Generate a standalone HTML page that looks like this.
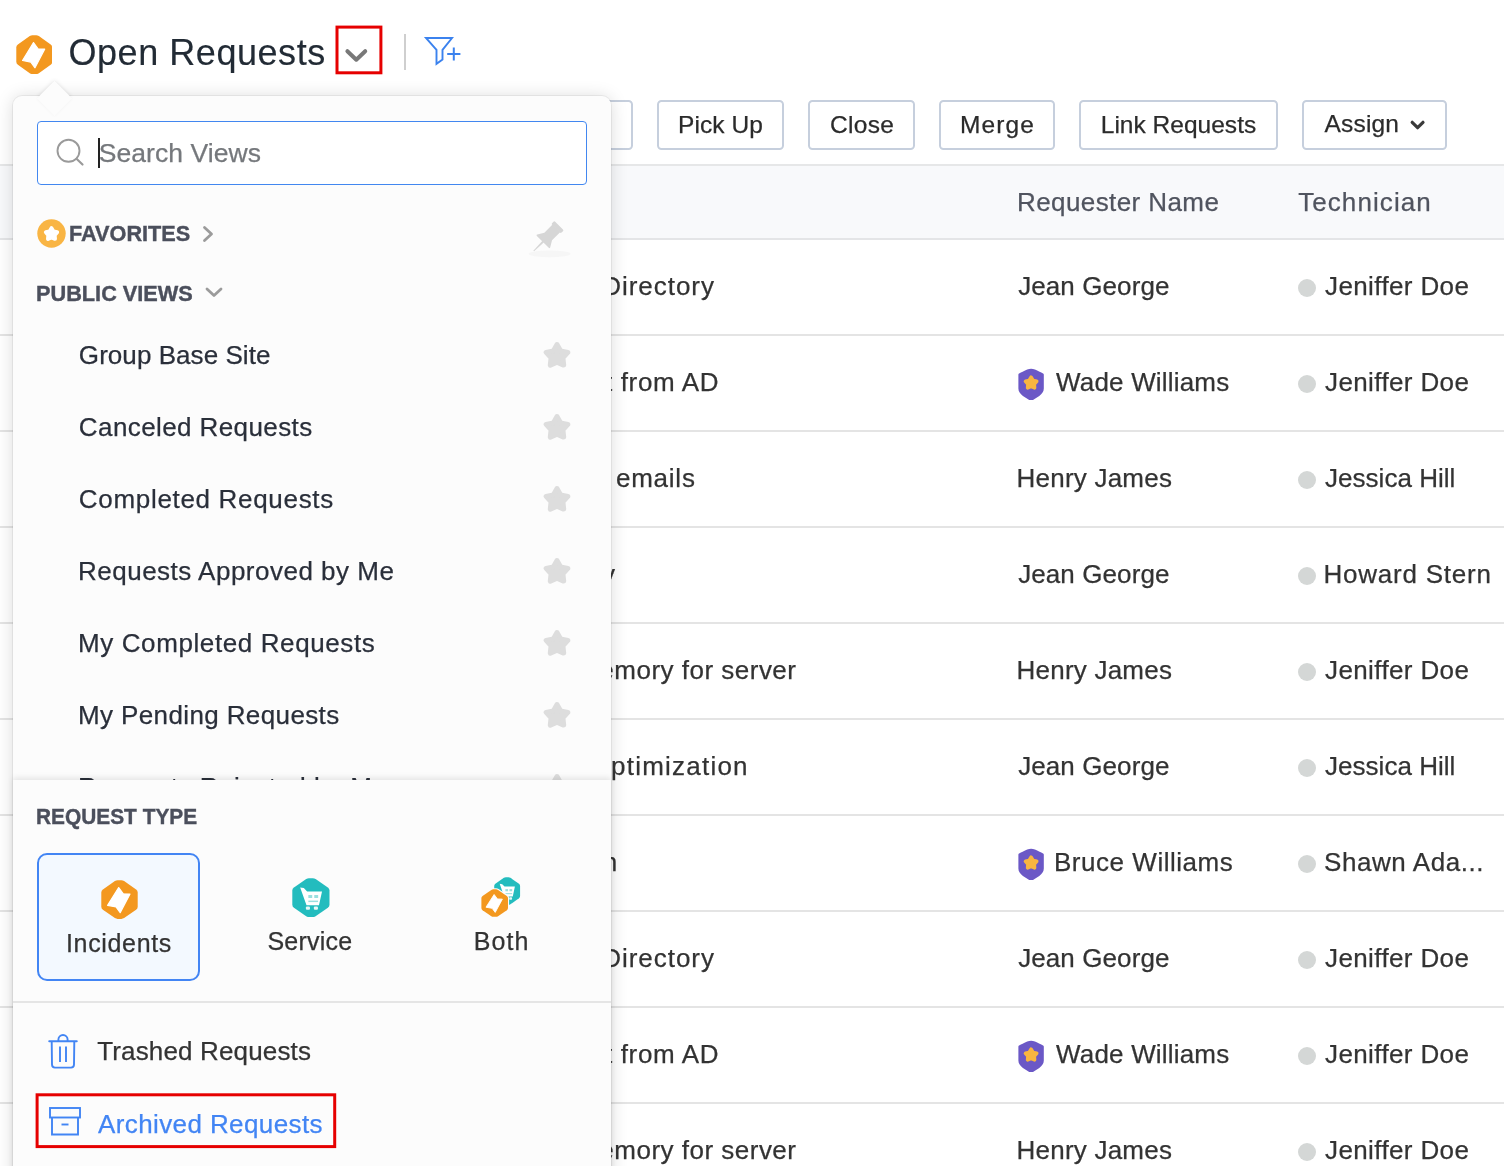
<!DOCTYPE html>
<html lang="en">
<head>
<meta charset="utf-8">
<title>Open Requests</title>
<style>
*{box-sizing:border-box}
html,body{margin:0;padding:0}
html{overflow:hidden;background:#fff}
body{width:1504px;height:1166px;overflow:hidden;background:#fff;font-family:"Liberation Sans",Arial,Helvetica,sans-serif;position:relative}
.t{position:absolute;white-space:nowrap;display:block}
#page{will-change:transform;position:absolute;left:0;top:0;width:1504px;height:1166px;overflow:hidden}
.abs{position:absolute}
#thead{position:absolute;left:0;top:164px;width:1504px;height:76px;background:#f8f9fb;border-top:2px solid #e6e7e8;border-bottom:2px solid #e4e5e7}
.rline{position:absolute;left:0;width:1504px;height:2px;background:#e4e4e4}
.dot{position:absolute;left:1298px;width:18px;height:18px;border-radius:50%;background:#d4d7d6}
.shield{position:absolute;left:1017.9px;width:26.6px;height:32.4px}
.btn{position:absolute;top:100px;height:50px;border:2px solid #c6cfdd;border-radius:4.5px;background:#fff}
#pop{position:absolute;left:12.6px;top:96px;width:598.8px;height:1100px;background:#fcfcfc;border-radius:9px;box-shadow:0 1px 17px rgba(0,0,0,.15),0 0 0 1px rgba(0,0,0,.055)}
#arrow{position:absolute;left:42.3px;top:85.7px;width:25px;height:25px;background:#fcfcfc;transform:rotate(45deg);box-shadow:0 0 5px rgba(0,0,0,.12)}
#arrow2{position:absolute;left:42.3px;top:85.7px;width:25px;height:25px;background:#fcfcfc;transform:rotate(45deg);box-shadow:0 0 3px rgba(0,0,0,.045)}
#arrowcover{display:none}
#popin{will-change:transform;position:absolute;left:0;top:0;width:1504px;height:1166px;overflow:hidden}
#list{position:absolute;left:13px;top:97px;width:598px;height:683px;overflow:hidden}
#search{position:absolute;left:37px;top:121px;width:550px;height:64px;border:1.5px solid #4287f0;border-radius:4px;background:#fff}
#caret{position:absolute;left:98px;top:138px;width:2px;height:30px;background:#222}
.star{position:absolute;left:543px;width:28px;height:28px}
#panel{position:absolute;left:12.6px;top:780px;width:598.8px;height:400px;background:#fcfcfc;box-shadow:0 -2px 6px rgba(0,0,0,.10)}
#incbox{position:absolute;left:37px;top:853px;width:163px;height:128px;border:2px solid #4285f4;border-radius:10px;background:#f3f9ff}
#pdiv{position:absolute;left:13px;top:1001px;width:598px;height:2px;background:#e5e5e5}
.red{position:absolute;border:3px solid #e60000}
</style>
</head>
<body>
<div id="page">
 <div id="thead"></div>
 <!-- header -->
 <svg class="abs" style="left:15.7px;top:34.6px;width:36.6px;height:39.4px" viewBox="0 0 37 39.400" preserveAspectRatio="none"><g><path d="M13.900 1.100Q15.200.300 16.600.300H20.400Q21.800.300 23.100 1.100L35.100 9.600Q36.700 10.800 36.700 12.600V26.800Q36.700 28.600 35.100 29.800L23.100 38.300Q21.800 39.100 20.400 39.100H16.600Q15.200 39.100 13.900 38.300L1.900 29.800Q.300 28.600.300 26.800V12.600Q.300 10.800 1.900 9.600Z" fill="#f3981f"/><path d="M17.700 7.600L22.300 13.900 29 14.100 19.200 32.800 15 27.100 6.600 25.500Z" fill="#fff" stroke="#fff" stroke-width="1.200" stroke-linejoin="round"/></g></svg>
 <svg class="abs" style="left:330px;top:20px;width:60px;height:60px" viewBox="330 20 60 60"><rect x="337" y="27.100" width="43.900" height="45.700" fill="none" stroke="#e60000" stroke-width="3"/></svg>
 <svg class="abs" style="left:343px;top:46px;width:27px;height:19px" viewBox="0 0 27 19"><path d="M4.400 5.200L13.300 13.700 22.200 5.200" fill="none" stroke="#787878" stroke-width="4" stroke-linecap="round" stroke-linejoin="round"/></svg>
 <div class="abs" style="left:404px;top:34px;width:2px;height:36px;background:#cfcfcf"></div>
 <svg class="abs" style="left:423px;top:35px;width:40px;height:32px" viewBox="0 0 40 32"><path d="M3 3h26L19.500 14.800V24.500L13.500 28.800V14.800z" fill="none" stroke="#3b82ee" stroke-width="1.900" stroke-linejoin="miter"/><path d="M24.200 19h13.200M30.800 12.400v13.200" stroke="#3b82ee" stroke-width="2" fill="none"/></svg>
 <!-- toolbar buttons -->
 <div class="btn" style="left:560px;width:73px"></div>
 <div class="btn" style="left:657px;width:127px"></div>
 <div class="btn" style="left:808px;width:107px"></div>
 <div class="btn" style="left:939px;width:116px"></div>
 <div class="btn" style="left:1079px;width:199px"></div>
 <div class="btn" style="left:1302px;width:145px"></div>
 <svg class="abs" style="left:1408px;top:118px;width:20px;height:15px" viewBox="0 0 20 15"><path d="M4.200 4.300L9.600 9.700 15 4.300" fill="none" stroke="#3a3a3a" stroke-width="3.200" stroke-linecap="round" stroke-linejoin="round"/></svg>
<div class="rline" style="top:334px"></div>
<div class="dot" style="top:279px"></div>
<div class="rline" style="top:430px"></div>
<div class="dot" style="top:375px"></div>
<svg class="shield" style="top:367.6px" viewBox="0 0 27 33" preserveAspectRatio="none"><g><path d="M13.3 0.700c2.400 0 5.200 1.300 8.600 3 2.600 1.200 4.300 1.600 4.300 2.800v14.500c0 3.200-1.800 5.400-4.600 7.400l-6 3.900c-1.500.9-3.100.9-4.600 0l-6-3.900C2.200 26.400.400 24.200.400 21V6.500c0-1.200 1.700-1.600 4.300-2.800 3.400-1.700 6.200-3 8.600-3z" fill="#6b58c6"/><path d="M13.30 9.40 L15.30 12.65 L19.01 13.55 L16.53 16.45 L16.83 20.25 L13.30 18.80 L9.77 20.25 L10.07 16.45 L7.59 13.55 L11.30 12.65Z" fill="#f9b540" stroke="#f9b540" stroke-width="3.600" stroke-linejoin="round"/></g></svg>
<div class="rline" style="top:526px"></div>
<div class="dot" style="top:471px"></div>
<div class="rline" style="top:622px"></div>
<div class="dot" style="top:567px"></div>
<div class="rline" style="top:718px"></div>
<div class="dot" style="top:663px"></div>
<div class="rline" style="top:814px"></div>
<div class="dot" style="top:759px"></div>
<div class="rline" style="top:910px"></div>
<div class="dot" style="top:855px"></div>
<svg class="shield" style="top:847.6px" viewBox="0 0 27 33" preserveAspectRatio="none"><g><path d="M13.3 0.700c2.400 0 5.200 1.300 8.600 3 2.600 1.200 4.300 1.600 4.300 2.800v14.500c0 3.200-1.800 5.400-4.600 7.400l-6 3.900c-1.500.9-3.100.9-4.600 0l-6-3.900C2.200 26.400.400 24.200.400 21V6.500c0-1.200 1.700-1.600 4.300-2.800 3.400-1.700 6.200-3 8.600-3z" fill="#6b58c6"/><path d="M13.30 9.40 L15.30 12.65 L19.01 13.55 L16.53 16.45 L16.83 20.25 L13.30 18.80 L9.77 20.25 L10.07 16.45 L7.59 13.55 L11.30 12.65Z" fill="#f9b540" stroke="#f9b540" stroke-width="3.600" stroke-linejoin="round"/></g></svg>
<div class="rline" style="top:1006px"></div>
<div class="dot" style="top:951px"></div>
<div class="rline" style="top:1102px"></div>
<div class="dot" style="top:1047px"></div>
<svg class="shield" style="top:1039.6px" viewBox="0 0 27 33" preserveAspectRatio="none"><g><path d="M13.3 0.700c2.400 0 5.200 1.300 8.600 3 2.600 1.200 4.300 1.600 4.300 2.800v14.500c0 3.200-1.800 5.400-4.600 7.400l-6 3.900c-1.500.9-3.100.9-4.600 0l-6-3.900C2.200 26.400.400 24.200.400 21V6.500c0-1.200 1.700-1.600 4.300-2.800 3.400-1.700 6.200-3 8.600-3z" fill="#6b58c6"/><path d="M13.30 9.40 L15.30 12.65 L19.01 13.55 L16.53 16.45 L16.83 20.25 L13.30 18.80 L9.77 20.25 L10.07 16.45 L7.59 13.55 L11.30 12.65Z" fill="#f9b540" stroke="#f9b540" stroke-width="3.600" stroke-linejoin="round"/></g></svg>
<div class="rline" style="top:1198px"></div>
<div class="dot" style="top:1143px"></div>
<span class="t" style="top:31px;font-size:36px;line-height:43px;color:#222b35;letter-spacing:0.543px;left:68.51px;-webkit-text-stroke:0.15px #222b35;">Open Requests</span>
<span class="t" style="top:110px;font-size:24.5px;line-height:29px;color:#2b2b2b;letter-spacing:0.068px;left:678.00px;-webkit-text-stroke:0.25px #2b2b2b;">Pick Up</span>
<span class="t" style="top:110px;font-size:24.5px;line-height:29px;color:#2b2b2b;letter-spacing:0.328px;left:830.00px;-webkit-text-stroke:0.25px #2b2b2b;">Close</span>
<span class="t" style="top:110px;font-size:24.5px;line-height:29px;color:#2b2b2b;letter-spacing:1.108px;left:960.00px;-webkit-text-stroke:0.25px #2b2b2b;">Merge</span>
<span class="t" style="top:110px;font-size:24.5px;line-height:29px;color:#2b2b2b;letter-spacing:0.018px;left:1100.74px;-webkit-text-stroke:0.25px #2b2b2b;">Link Requests</span>
<span class="t" style="top:109px;font-size:24.5px;line-height:29px;color:#2b2b2b;letter-spacing:0.183px;left:1324.54px;-webkit-text-stroke:0.25px #2b2b2b;">Assign</span>
<span class="t" style="top:187px;font-size:26px;line-height:31px;color:#50545f;letter-spacing:0.411px;left:1017.00px;-webkit-text-stroke:0.25px #50545f;">Requester Name</span>
<span class="t" style="top:187px;font-size:26px;line-height:31px;color:#50545f;letter-spacing:1.082px;left:1298.16px;-webkit-text-stroke:0.25px #50545f;">Technician</span>
<span class="t" style="top:271px;font-size:26px;line-height:31px;color:#333;letter-spacing:0.960px;right:789.08px;-webkit-text-stroke:0.25px #333;">Unable to connect to Active Directory</span>
<span class="t" style="top:271px;font-size:26px;line-height:31px;color:#333;letter-spacing:0.088px;left:1018.20px;-webkit-text-stroke:0.25px #333;">Jean George</span>
<span class="t" style="top:271px;font-size:26px;line-height:31px;color:#333;letter-spacing:0.372px;left:1325.08px;-webkit-text-stroke:0.25px #333;">Jeniffer Doe</span>
<span class="t" style="top:367px;font-size:26px;line-height:31px;color:#333;letter-spacing:0.644px;right:784.83px;-webkit-text-stroke:0.25px #333;">Remove my account from AD</span>
<span class="t" style="top:367px;font-size:26px;line-height:31px;color:#333;letter-spacing:0.190px;left:1056.00px;-webkit-text-stroke:0.25px #333;">Wade Williams</span>
<span class="t" style="top:367px;font-size:26px;line-height:31px;color:#333;letter-spacing:0.372px;left:1325.08px;-webkit-text-stroke:0.25px #333;">Jeniffer Doe</span>
<span class="t" style="top:463px;font-size:26px;line-height:31px;color:#333;letter-spacing:0.764px;right:808.33px;-webkit-text-stroke:0.25px #333;">Unable to fetch emails</span>
<span class="t" style="top:463px;font-size:26px;line-height:31px;color:#333;letter-spacing:0.216px;left:1016.59px;-webkit-text-stroke:0.25px #333;">Henry James</span>
<span class="t" style="top:463px;font-size:26px;line-height:31px;color:#333;letter-spacing:0.018px;left:1325.08px;-webkit-text-stroke:0.25px #333;">Jessica Hill</span>
<span class="t" style="top:559px;font-size:26px;line-height:31px;color:#333;letter-spacing:0.600px;right:888.40px;-webkit-text-stroke:0.25px #333;">Printer is not working properly</span>
<span class="t" style="top:559px;font-size:26px;line-height:31px;color:#333;letter-spacing:0.088px;left:1018.20px;-webkit-text-stroke:0.25px #333;">Jean George</span>
<span class="t" style="top:559px;font-size:26px;line-height:31px;color:#333;letter-spacing:0.773px;left:1323.47px;-webkit-text-stroke:0.25px #333;">Howard Stern</span>
<span class="t" style="top:655px;font-size:26px;line-height:31px;color:#333;letter-spacing:0.491px;right:707.52px;-webkit-text-stroke:0.25px #333;">Need more memory for server</span>
<span class="t" style="top:655px;font-size:26px;line-height:31px;color:#333;letter-spacing:0.216px;left:1016.59px;-webkit-text-stroke:0.25px #333;">Henry James</span>
<span class="t" style="top:655px;font-size:26px;line-height:31px;color:#333;letter-spacing:0.372px;left:1325.08px;-webkit-text-stroke:0.25px #333;">Jeniffer Doe</span>
<span class="t" style="top:751px;font-size:26px;line-height:31px;color:#333;letter-spacing:1.220px;right:755.26px;-webkit-text-stroke:0.25px #333;">Database performance optimization</span>
<span class="t" style="top:751px;font-size:26px;line-height:31px;color:#333;letter-spacing:0.088px;left:1018.20px;-webkit-text-stroke:0.25px #333;">Jean George</span>
<span class="t" style="top:751px;font-size:26px;line-height:31px;color:#333;letter-spacing:0.018px;left:1325.08px;-webkit-text-stroke:0.25px #333;">Jessica Hill</span>
<span class="t" style="top:847px;font-size:26px;line-height:31px;color:#333;letter-spacing:0.600px;right:886.27px;-webkit-text-stroke:0.25px #333;">Request for new software installation</span>
<span class="t" style="top:847px;font-size:26px;line-height:31px;color:#333;letter-spacing:0.528px;left:1054.00px;-webkit-text-stroke:0.25px #333;">Bruce Williams</span>
<span class="t" style="top:847px;font-size:26px;line-height:31px;color:#333;letter-spacing:0.577px;left:1323.97px;-webkit-text-stroke:0.25px #333;">Shawn Ada...</span>
<span class="t" style="top:943px;font-size:26px;line-height:31px;color:#333;letter-spacing:0.960px;right:789.08px;-webkit-text-stroke:0.25px #333;">Unable to connect to Active Directory</span>
<span class="t" style="top:943px;font-size:26px;line-height:31px;color:#333;letter-spacing:0.088px;left:1018.20px;-webkit-text-stroke:0.25px #333;">Jean George</span>
<span class="t" style="top:943px;font-size:26px;line-height:31px;color:#333;letter-spacing:0.372px;left:1325.08px;-webkit-text-stroke:0.25px #333;">Jeniffer Doe</span>
<span class="t" style="top:1039px;font-size:26px;line-height:31px;color:#333;letter-spacing:0.644px;right:784.83px;-webkit-text-stroke:0.25px #333;">Remove my account from AD</span>
<span class="t" style="top:1039px;font-size:26px;line-height:31px;color:#333;letter-spacing:0.190px;left:1056.00px;-webkit-text-stroke:0.25px #333;">Wade Williams</span>
<span class="t" style="top:1039px;font-size:26px;line-height:31px;color:#333;letter-spacing:0.372px;left:1325.08px;-webkit-text-stroke:0.25px #333;">Jeniffer Doe</span>
<span class="t" style="top:1135px;font-size:26px;line-height:31px;color:#333;letter-spacing:0.491px;right:707.52px;-webkit-text-stroke:0.25px #333;">Need more memory for server</span>
<span class="t" style="top:1135px;font-size:26px;line-height:31px;color:#333;letter-spacing:0.216px;left:1016.59px;-webkit-text-stroke:0.25px #333;">Henry James</span>
<span class="t" style="top:1135px;font-size:26px;line-height:31px;color:#333;letter-spacing:0.372px;left:1325.08px;-webkit-text-stroke:0.25px #333;">Jeniffer Doe</span>
</div>
<div id="arrow"></div>
<div id="pop"></div>
<div id="arrow2"></div>
<div id="arrowcover"></div>
<div id="popin">
 <div id="search"></div>
 <svg class="abs" style="left:55px;top:137px;width:30px;height:30px" viewBox="0 0 30 30"><circle cx="13.500" cy="13.800" r="11" fill="none" stroke="#9a9a9a" stroke-width="1.900"/><path d="M21.500 21.800l6 5.700" stroke="#9a9a9a" stroke-width="2.200" stroke-linecap="round"/></svg>
 <div id="caret"></div>
 <!-- favorites icon -->
 <svg class="abs" style="left:37px;top:219px;width:29px;height:29px" viewBox="0 0 29 29"><circle cx="14.500" cy="14.500" r="14.200" fill="#f9b544"/><path d="M14.50 9.20 L16.44 12.43 L20.11 13.28 L17.64 16.12 L17.97 19.87 L14.50 18.40 L11.03 19.87 L11.36 16.12 L8.89 13.28 L12.56 12.43Z" fill="#fff" stroke="#fff" stroke-width="4" stroke-linejoin="round"/></svg>
 <svg class="abs" style="left:200px;top:224px;width:16px;height:20px" viewBox="0 0 16 20"><path d="M4.500 3.500L11.500 10 4.500 16.500" fill="none" stroke="#9b9b9b" stroke-width="2.800" stroke-linecap="round" stroke-linejoin="round"/></svg>
 <svg class="abs" style="left:203px;top:284px;width:22px;height:16px" viewBox="0 0 22 16"><path d="M4 5l7 6.500L18 5" fill="none" stroke="#9b9b9b" stroke-width="2.800" stroke-linecap="round" stroke-linejoin="round"/></svg>
 <!-- pin -->
 <svg class="abs" style="left:522px;top:212px;width:56px;height:52px" viewBox="522 212 56 52"><ellipse cx="549.600" cy="253.800" rx="21" ry="3.400" fill="#f6f6f6"/><g transform="translate(558.800 225.900) rotate(45)" fill="#d6d6d6"><rect x="-6.700" y="-.400" width="13.400" height="4.400" rx="1.200"/><path d="M-5.400 3.500h10.800v11.500l3.800 6.400q.600 1.200-.800 1.200h-16.800q-1.400 0-.800-1.200l3.800-6.400z"/><path d="M-1.100 22h2.200l-.6 13.500h-1z"/></g></svg>
 <div id="list">
  <div style="position:absolute;left:-13px;top:-97px;width:1504px;height:1166px">
<svg class="star" style="top:341px" viewBox="0 0 28 28"><g><path d="M14.00 3.50 L17.64 9.88 L24.84 11.38 L19.90 16.82 L20.70 24.12 L14.00 21.10 L7.30 24.12 L8.10 16.82 L3.16 11.38 L10.36 9.88Z" fill="#dddddd" stroke="#dddddd" stroke-width="5" stroke-linejoin="round"/></g></svg>
<svg class="star" style="top:413px" viewBox="0 0 28 28"><g><path d="M14.00 3.50 L17.64 9.88 L24.84 11.38 L19.90 16.82 L20.70 24.12 L14.00 21.10 L7.30 24.12 L8.10 16.82 L3.16 11.38 L10.36 9.88Z" fill="#dddddd" stroke="#dddddd" stroke-width="5" stroke-linejoin="round"/></g></svg>
<svg class="star" style="top:485px" viewBox="0 0 28 28"><g><path d="M14.00 3.50 L17.64 9.88 L24.84 11.38 L19.90 16.82 L20.70 24.12 L14.00 21.10 L7.30 24.12 L8.10 16.82 L3.16 11.38 L10.36 9.88Z" fill="#dddddd" stroke="#dddddd" stroke-width="5" stroke-linejoin="round"/></g></svg>
<svg class="star" style="top:557px" viewBox="0 0 28 28"><g><path d="M14.00 3.50 L17.64 9.88 L24.84 11.38 L19.90 16.82 L20.70 24.12 L14.00 21.10 L7.30 24.12 L8.10 16.82 L3.16 11.38 L10.36 9.88Z" fill="#dddddd" stroke="#dddddd" stroke-width="5" stroke-linejoin="round"/></g></svg>
<svg class="star" style="top:629px" viewBox="0 0 28 28"><g><path d="M14.00 3.50 L17.64 9.88 L24.84 11.38 L19.90 16.82 L20.70 24.12 L14.00 21.10 L7.30 24.12 L8.10 16.82 L3.16 11.38 L10.36 9.88Z" fill="#dddddd" stroke="#dddddd" stroke-width="5" stroke-linejoin="round"/></g></svg>
<svg class="star" style="top:701px" viewBox="0 0 28 28"><g><path d="M14.00 3.50 L17.64 9.88 L24.84 11.38 L19.90 16.82 L20.70 24.12 L14.00 21.10 L7.30 24.12 L8.10 16.82 L3.16 11.38 L10.36 9.88Z" fill="#dddddd" stroke="#dddddd" stroke-width="5" stroke-linejoin="round"/></g></svg>
<svg class="star" style="top:773px" viewBox="0 0 28 28"><g><path d="M14.00 3.50 L17.64 9.88 L24.84 11.38 L19.90 16.82 L20.70 24.12 L14.00 21.10 L7.30 24.12 L8.10 16.82 L3.16 11.38 L10.36 9.88Z" fill="#dddddd" stroke="#dddddd" stroke-width="5" stroke-linejoin="round"/></g></svg>
  </div>
 </div>
<span class="t" style="top:137px;font-size:26.5px;line-height:32px;color:#75787c;letter-spacing:0.065px;left:98.71px;-webkit-text-stroke:0.25px #75787c;">Search Views</span>
<span class="t" style="top:220px;font-size:22.5px;line-height:27px;color:#4b4f5c;font-weight:700;left:68.77px;transform:scaleX(0.9637);transform-origin:0 0;-webkit-text-stroke:0.4px #4b4f5c;">FAVORITES</span>
<span class="t" style="top:280px;font-size:22.5px;line-height:27px;color:#4b4f5c;font-weight:700;left:36.16px;transform:scaleX(0.9649);transform-origin:0 0;-webkit-text-stroke:0.4px #4b4f5c;">PUBLIC VIEWS</span>
<span class="t" style="top:340px;font-size:26px;line-height:31px;color:#2a2f3a;letter-spacing:0.057px;left:78.86px;-webkit-text-stroke:0.25px #2a2f3a;">Group Base Site</span>
<span class="t" style="top:412px;font-size:26px;line-height:31px;color:#2a2f3a;letter-spacing:0.404px;left:78.85px;-webkit-text-stroke:0.25px #2a2f3a;">Canceled Requests</span>
<span class="t" style="top:484px;font-size:26px;line-height:31px;color:#2a2f3a;letter-spacing:0.681px;left:78.85px;-webkit-text-stroke:0.25px #2a2f3a;">Completed Requests</span>
<span class="t" style="top:556px;font-size:26px;line-height:31px;color:#2a2f3a;letter-spacing:0.495px;left:78.00px;-webkit-text-stroke:0.25px #2a2f3a;">Requests Approved by Me</span>
<span class="t" style="top:628px;font-size:26px;line-height:31px;color:#2a2f3a;letter-spacing:0.605px;left:78.00px;-webkit-text-stroke:0.25px #2a2f3a;">My Completed Requests</span>
<span class="t" style="top:700px;font-size:26px;line-height:31px;color:#2a2f3a;letter-spacing:0.381px;left:78.00px;-webkit-text-stroke:0.25px #2a2f3a;">My Pending Requests</span>
<span class="t" style="top:772px;font-size:26px;line-height:31px;color:#2a2f3a;letter-spacing:0.508px;left:78.00px;-webkit-text-stroke:0.25px #2a2f3a;">Requests Rejected by Me</span>
 <div id="panel"></div>
 <div id="incbox"></div>
 <div id="pdiv"></div>
 <svg class="abs" style="left:100.6px;top:879.8px;width:37px;height:39.2px" viewBox="0 0 37 39.400" preserveAspectRatio="none"><g><path d="M13.900 1.100Q15.200.300 16.600.300H20.400Q21.800.300 23.100 1.100L35.100 9.600Q36.700 10.800 36.700 12.600V26.800Q36.700 28.600 35.100 29.800L23.100 38.300Q21.800 39.100 20.400 39.100H16.600Q15.200 39.100 13.900 38.300L1.900 29.800Q.300 28.600.300 26.800V12.600Q.300 10.800 1.900 9.600Z" fill="#f3981f"/><path d="M17.700 7.600L22.300 13.900 29 14.100 19.200 32.800 15 27.100 6.600 25.500Z" fill="#fff" stroke="#fff" stroke-width="1.200" stroke-linejoin="round"/></g></svg>
 <svg class="abs" style="left:292.1px;top:877.6px;width:37.8px;height:39.4px" viewBox="0 0 37 39.400" preserveAspectRatio="none"><g><path d="M13.900 1.100Q15.200.300 16.600.300H20.400Q21.800.300 23.100 1.100L35.100 9.600Q36.700 10.800 36.700 12.600V26.800Q36.700 28.600 35.100 29.800L23.100 38.300Q21.800 39.100 20.400 39.100H16.600Q15.200 39.100 13.900 38.300L1.900 29.800Q.300 28.600.300 26.800V12.600Q.300 10.800 1.900 9.600Z" fill="#23bcbe"/><path d="M8 9.600l3.600.5 3.200 3.300h14.600l-3 13.800H14.200z" fill="#fff"/><rect x="16" y="17" width="3.800" height="3" fill="#9adfdf"/><rect x="21.800" y="17" width="3.800" height="3" fill="#9adfdf"/><rect x="16" y="22.600" width="9.500" height="1.500" fill="#9adfdf"/><rect x="13.600" y="28.400" width="4" height="3.400" rx="1" fill="#e8f7f7"/><rect x="21.400" y="28.400" width="4" height="3.400" rx="1" fill="#e8f7f7"/></g></svg>
 <svg class="abs" style="left:494.4px;top:876.5px;width:26.3px;height:28.1px" viewBox="0 0 37 39.400" preserveAspectRatio="none"><g><path d="M13.900 1.100Q15.200.300 16.600.300H20.400Q21.800.300 23.100 1.100L35.100 9.600Q36.700 10.800 36.700 12.600V26.800Q36.700 28.600 35.100 29.800L23.100 38.300Q21.800 39.100 20.400 39.100H16.600Q15.200 39.100 13.900 38.300L1.900 29.800Q.300 28.600.300 26.800V12.600Q.300 10.800 1.900 9.600Z" fill="#23bcbe"/><path d="M8 9.600l3.600.5 3.200 3.300h14.600l-3 13.800H14.200z" fill="#fff"/><rect x="16" y="17" width="3.800" height="3" fill="#9adfdf"/><rect x="21.800" y="17" width="3.800" height="3" fill="#9adfdf"/><rect x="16" y="22.600" width="9.500" height="1.500" fill="#9adfdf"/><rect x="13.600" y="28.400" width="4" height="3.400" rx="1" fill="#e8f7f7"/><rect x="21.400" y="28.400" width="4" height="3.400" rx="1" fill="#e8f7f7"/></g></svg>
 <svg class="abs" style="left:479.8px;top:888px;width:29.4px;height:30.2px;overflow:visible" viewBox="-1.600 -1.600 40.200 42.600" preserveAspectRatio="none"><path d="M13.900 1.100Q15.200.300 16.600.300H20.400Q21.800.300 23.100 1.100L35.100 9.600Q36.700 10.800 36.700 12.600V26.800Q36.700 28.600 35.100 29.800L23.100 38.300Q21.800 39.100 20.400 39.100H16.600Q15.200 39.100 13.900 38.300L1.900 29.800Q.300 28.600.300 26.800V12.600Q.300 10.800 1.900 9.600Z" fill="#fcfcfc" stroke="#fcfcfc" stroke-width="3"/><g><path d="M13.900 1.100Q15.200.300 16.600.300H20.400Q21.800.300 23.100 1.100L35.100 9.600Q36.700 10.800 36.700 12.600V26.800Q36.700 28.600 35.100 29.800L23.100 38.300Q21.800 39.100 20.400 39.100H16.600Q15.200 39.100 13.900 38.300L1.900 29.800Q.300 28.600.300 26.800V12.600Q.300 10.800 1.900 9.600Z" fill="#f3981f"/><path d="M17.700 7.600L22.300 13.900 29 14.100 19.200 32.800 15 27.100 6.600 25.500Z" fill="#fff" stroke="#fff" stroke-width="1.200" stroke-linejoin="round"/></g></svg>
 <!-- trash -->
 <svg class="abs" style="left:47px;top:1032px;width:32px;height:38px" viewBox="0 0 32 38"><path d="M2.200 9.300h27.600" stroke="#4285f4" stroke-width="1.900" fill="none" stroke-linecap="round"/><path d="M11.400 9V7.600a4.600 4.600 0 0 1 9.200 0V9" stroke="#4285f4" stroke-width="1.900" fill="none"/><path d="M4.700 9.600l.3 23a3 3 0 0 0 3 3h16a3 3 0 0 0 3-3l.3-23" stroke="#4285f4" stroke-width="1.900" fill="none"/><path d="M13 14.500v15.500M19 14.500v15.500" stroke="#4285f4" stroke-width="1.900" fill="none"/></svg>
 <!-- archive -->
 <svg class="abs" style="left:47px;top:1105px;width:36px;height:33px" viewBox="0 0 36 33"><rect x="3" y="3" width="30" height="9.500" fill="none" stroke="#4285f4" stroke-width="1.900"/><path d="M5 12.500v17h26v-17" fill="none" stroke="#4285f4" stroke-width="1.900"/><path d="M14.500 19.500h7" stroke="#4285f4" stroke-width="1.900"/></svg>
 <svg class="abs" style="left:30px;top:1088px;width:312px;height:66px" viewBox="30 1088 312 66"><rect x="37.100" y="1094.800" width="297.600" height="51.800" fill="none" stroke="#e60000" stroke-width="3"/></svg>
<span class="t" style="top:803px;font-size:22.5px;line-height:27px;color:#4b4f5c;font-weight:700;left:36.33px;transform:scaleX(0.9272);transform-origin:0 0;-webkit-text-stroke:0.4px #4b4f5c;">REQUEST TYPE</span>
<span class="t" style="top:928px;font-size:25px;line-height:30px;color:#333;letter-spacing:0.657px;left:66.00px;-webkit-text-stroke:0.25px #333;">Incidents</span>
<span class="t" style="top:926px;font-size:25px;line-height:30px;color:#333;letter-spacing:0.240px;left:267.42px;-webkit-text-stroke:0.25px #333;">Service</span>
<span class="t" style="top:926px;font-size:25px;line-height:30px;color:#333;letter-spacing:1.075px;left:473.74px;-webkit-text-stroke:0.25px #333;">Both</span>
<span class="t" style="top:1036px;font-size:26px;line-height:31px;color:#333;letter-spacing:0.149px;left:97.24px;-webkit-text-stroke:0.25px #333;">Trashed Requests</span>
<span class="t" style="top:1109px;font-size:26px;line-height:31px;color:#4285f4;letter-spacing:0.396px;left:98.00px;-webkit-text-stroke:0.25px #4285f4;">Archived Requests</span>
</div>
</body>
</html>
